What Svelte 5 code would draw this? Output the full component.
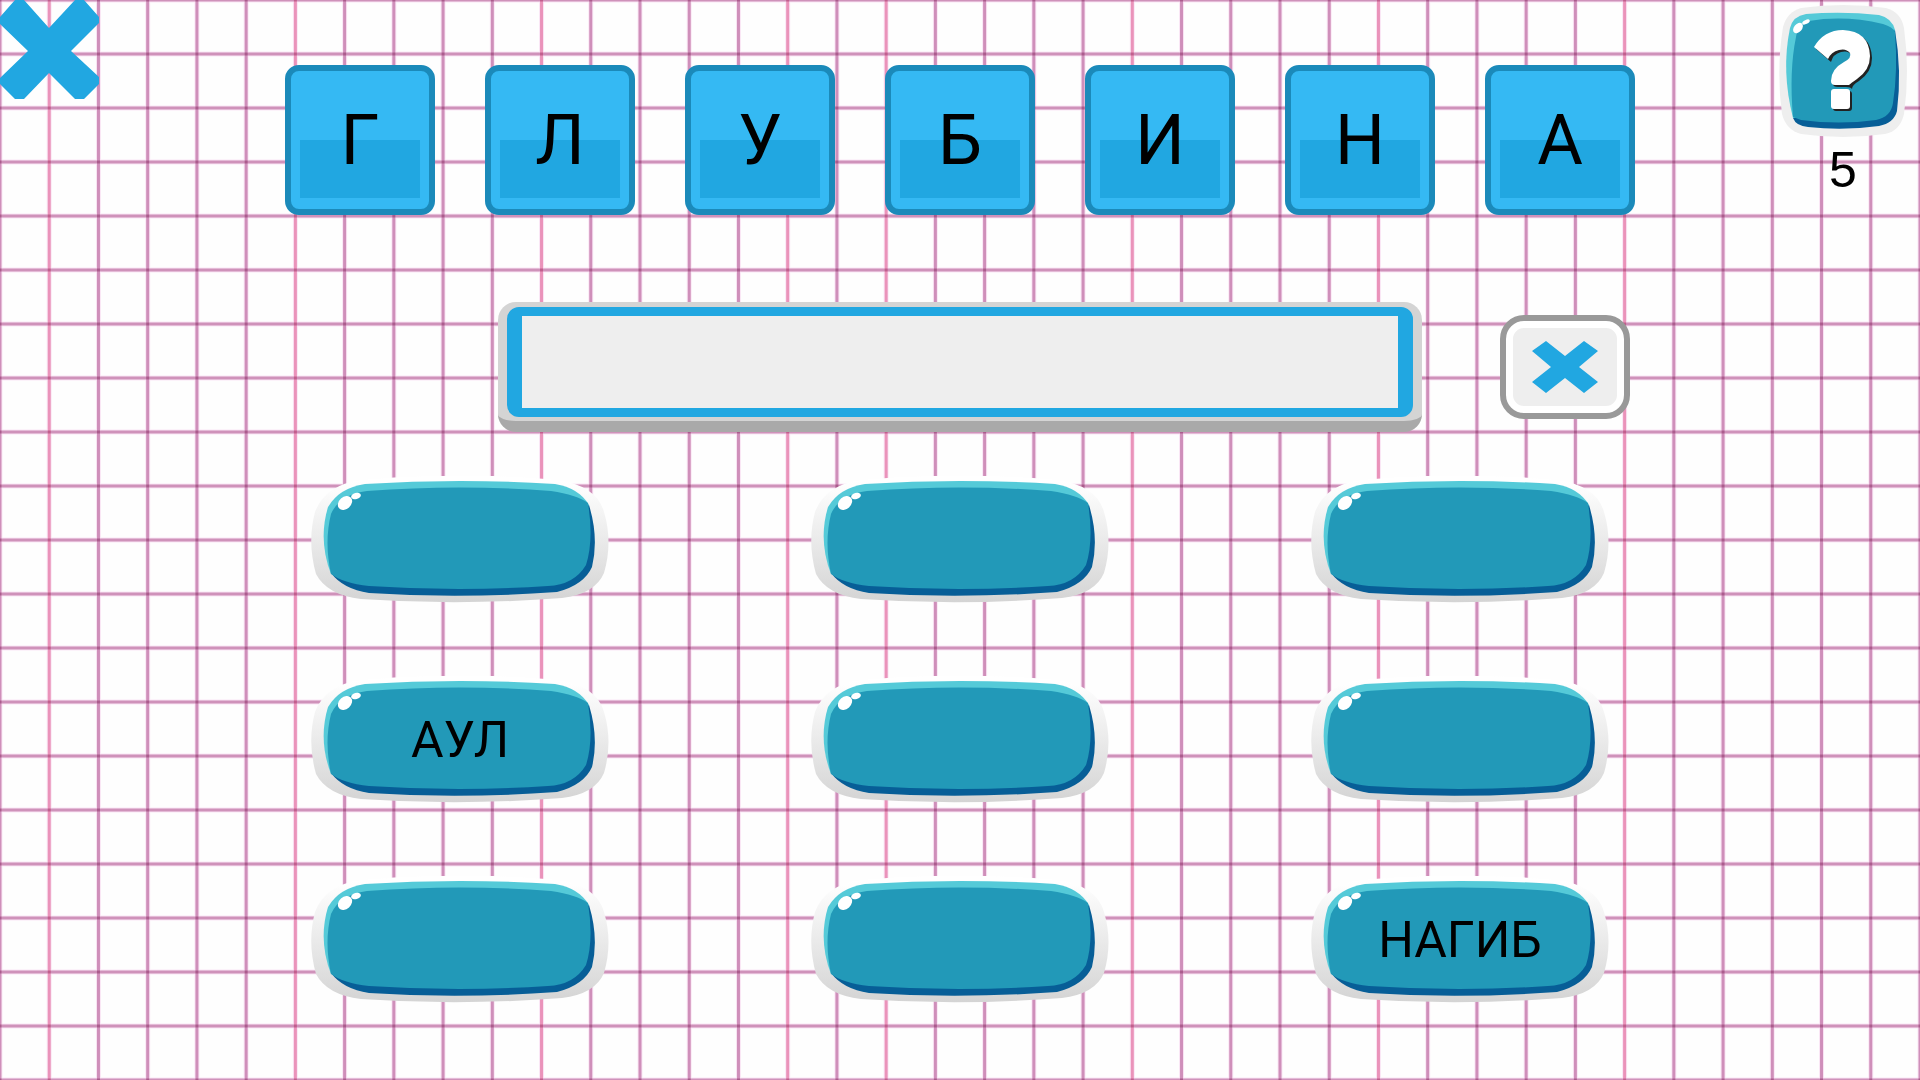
<script>
  const letters = ['Г', 'Л', 'У', 'Б', 'И', 'Н', 'А'];
  const words = ['', '', '', 'АУЛ', '', '', '', '', 'НАГИБ'];
  const columns = 39;
  const rows = 20;
  const pink = [1, 6, 11, 16, 18, 23, 28, 33];
  let entry = $state('');
</script>

<main class="game">
  <svg class="paper" aria-hidden="true">
    {#each Array(columns + 1) as _, i}
      <line class="halo" x1="{(i / columns) * 100}%" x2="{(i / columns) * 100}%" y1="0" y2="100%" />
    {/each}
    {#each Array(rows + 1) as _, i}
      <line class="halo" y1="{(i / rows) * 100}%" y2="{(i / rows) * 100}%" x1="0" x2="100%" />
    {/each}
    {#each Array(columns + 1) as _, i}
      <line class={pink.includes(i) ? 'rule pink' : 'rule'} x1="{(i / columns) * 100}%" x2="{(i / columns) * 100}%" y1="0" y2="100%" />
    {/each}
    {#each Array(rows + 1) as _, i}
      <line class="rule across" y1="{(i / rows) * 100}%" y2="{(i / rows) * 100}%" x1="0" x2="100%" />
    {/each}
  </svg>

  <header class="top">
    <button class="plain" aria-label="Закрыть">
      <svg class="close" viewBox="0 0 100 100" aria-hidden="true">
        <path d="M15 0H24L49 28L75 0H84L99 17V23L71 51L99 77V84L84 99H75L49 73L24 99H15L0 84V78L28 51L0 24V17Z" />
      </svg>
    </button>

    <div class="tiles">
      {#each letters as letter}
        <button class="tile" onclick={() => (entry += letter)}><span>{letter}</span></button>
      {/each}
    </div>

    <div class="help">
      <button class="plain" aria-label="Подсказка">
        <svg class="hint" viewBox="0 0 128 132" aria-hidden="true">
          <path fill="#eee" d="M22 3Q64-3 107 3Q122 7 125 23Q131 66 125 109Q121 126 106 129Q64 135 22 129Q7 125 3 109Q-3 66 4 22Q8 7 22 3Z" />
          <path fill="#075e97" d="M14 113Q17 121 29 122Q64 126 100 121Q115 118 118 106Q123 66 116 25L100 18Z" />
          <path fill="#55cad8" d="M27 9Q64 6 100 10Q113 13 116 25L108 40L30 111L14 113Q2 66 11 23Q14 11 27 9Z" />
          <path fill="#2299b8" d="M30 16Q66 10 104 19Q114 22 116 27Q119 66 114 98Q112 112 97 115Q60 120 22 115L14 112Q10 66 17 32Q18 20 30 16Z" />
          <ellipse cx="19" cy="23" rx="6" ry="4" transform="rotate(-50 19 23)" fill="#fff" />
          <ellipse cx="27" cy="17" rx="4" ry="2" transform="rotate(-25 27 17)" fill="#fff" />
          <g transform="translate(2 2)" fill="#222">
            <path d="M35 42Q45 25 64 25Q90 26 91 51Q91 65 78 74Q71 78 71 82Q70 80 65 80H57Q52 80 52 77Q52 65 65 57Q73 53 71 48Q67 43 60 45Q52 47 50 55Z" />
            <rect x="52" y="84" width="19" height="20" rx="3" />
          </g>
          <g fill="#fff">
            <path d="M35 42Q45 25 64 25Q90 26 91 51Q91 65 78 74Q72 78 70 80H56Q52 80 52 76Q52 64 65 57Q73 53 71 48Q67 43 60 45Q52 47 49 54Z" />
            <rect x="52" y="84" width="19" height="20" rx="3" />
          </g>
        </svg>
      </button>
      <span class="count">5</span>
    </div>
  </header>

  <div class="entry">
    <div class="frame">
      <input class="field" aria-label="Слово" bind:value={entry} />
    </div>
    <button class="clear" aria-label="Очистить" onclick={() => (entry = '')}>
      <svg viewBox="0 0 66 52" aria-hidden="true">
        <path d="M14 0L33 15L52 0L66 10L47 26L66 41L52 52L33 37L14 52L0 41L19 26L0 10Z" />
      </svg>
    </button>
  </div>

  <div class="words">
    {#each words as word}
      <button class="word" aria-label={word || 'Не угадано'}>
        <svg viewBox="0 0 298 128" aria-hidden="true">
          <defs>
            <linearGradient id="rim" x1="0" y1="0" x2="0" y2="1">
              <stop offset="0.05" stop-color="#fff" />
              <stop offset="1" stop-color="#d4d4d4" />
            </linearGradient>
          </defs>
          <path fill="url(#rim)" d="M50 4Q149-5 247 4Q286 10 293 36Q302 66 293 97Q284 118 251 122Q149 130 50 123Q16 119 5 98Q-4 66 4 36Q14 9 50 4Z" />
          <path fill="#075e97" d="M20 97Q32 113 58 117Q149 123 246 116Q273 109 281 91Q288 62 278 29L240 40Z" />
          <path fill="#55cad8" d="M54 8Q149 2 244 8Q268 12 278 29L240 60L40 97L20 98Q7 64 17 31Q28 12 54 8Z" />
          <path fill="#2299b8" d="M56 15Q149 8 240 15Q266 19 277 27Q283 64 275 89Q263 109 237 110Q149 116 58 110Q32 107 20 98Q13 66 20 38Q28 19 56 15Z" />
          <ellipse cx="34" cy="27" rx="8" ry="6" transform="rotate(-42 34 27)" fill="#fff" />
          <ellipse cx="45" cy="20" rx="5" ry="3" transform="rotate(-15 45 20)" fill="#fff" />
        </svg>
        <span>{word}</span>
      </button>
    {/each}
  </div>
</main>

<style>
  :global(body) {
    background: #fefefe;
  }
  .game {
    position: relative;
    isolation: isolate;
    min-height: 100vh;
    overflow: hidden;
    font-family: Roboto, 'Liberation Sans', sans-serif;
    color: #000;
  }
  button {
    border: 0;
    margin: 0;
    padding: 0;
    background: none;
    font: inherit;
    color: inherit;
    cursor: pointer;
  }
  svg {
    display: block;
  }
  .paper {
    position: absolute;
    inset: 0;
    width: 100%;
    height: 100%;
    z-index: -1;
  }
  .halo {
    stroke: #fae6f5;
    stroke-width: 5;
  }
  .rule {
    stroke: #cf8fba;
    stroke-width: 3;
  }
  .pink {
    stroke: #ea93ba;
  }
  .across {
    stroke: #d3a2c2;
    mix-blend-mode: multiply;
  }
  .top {
    display: grid;
    grid-template-columns: 1fr auto 1fr;
    align-items: start;
  }
  .plain {
    display: block;
  }
  .close {
    width: 100px;
    height: 100px;
    fill: #21a7e1;
  }
  .tiles {
    display: flex;
    gap: 50px;
    padding-top: 65px;
  }
  .tile {
    display: flex;
    align-items: center;
    justify-content: center;
    width: 150px;
    height: 150px;
    box-sizing: border-box;
    border: 6px solid #1b8aba;
    border-radius: 14px;
    background: linear-gradient(#21a7e1, #21a7e1) 9px 69px / 120px 58px no-repeat #35b9f3;
    font-size: 70px;
    line-height: 82px;
  }
  .help {
    display: flex;
    flex-direction: column;
    align-items: center;
    justify-self: end;
    gap: 8px;
    padding: 5px 13px 0 0;
  }
  .hint {
    width: 128px;
    height: 132px;
  }
  .count {
    font-family: 'Liberation Sans', Arial, sans-serif;
    font-size: 50px;
    line-height: 50px;
  }
  .entry {
    display: grid;
    grid-template-columns: 1fr auto 1fr;
    align-items: center;
    margin-top: 87px;
  }
  .frame {
    grid-column: 2;
    display: flex;
    width: 924px;
    height: 130px;
    box-sizing: border-box;
    padding: 5px 9px 4px;
    border-bottom: 11px solid #a9a9a9;
    border-radius: 18px;
    background: #d4d4d4;
  }
  .field {
    flex: 1;
    min-width: 0;
    box-sizing: border-box;
    border: solid #21a7e1;
    border-width: 9px 15px;
    border-radius: 12px;
    background: #eee;
    padding: 0 16px;
    font: inherit;
    font-size: 50px;
    outline: none;
  }
  .clear {
    display: flex;
    align-items: center;
    justify-content: center;
    width: 130px;
    height: 104px;
    margin-left: 78px;
    box-sizing: border-box;
    border: 6px solid #999;
    border-radius: 24px;
    background: #eee;
    box-shadow: inset 0 0 0 7px #fff;
  }
  .clear svg {
    width: 66px;
    height: 52px;
    fill: #21a7e1;
  }
  .words {
    display: grid;
    grid-template-columns: repeat(3, 298px);
    justify-content: center;
    gap: 72px 202px;
    margin-top: 44px;
  }
  .word {
    display: grid;
    place-items: center;
    height: 128px;
    font-size: 50px;
    line-height: 58px;
  }
  .word > * {
    grid-area: 1 / 1;
  }
  .word svg {
    width: 298px;
    height: 128px;
  }
</style>
